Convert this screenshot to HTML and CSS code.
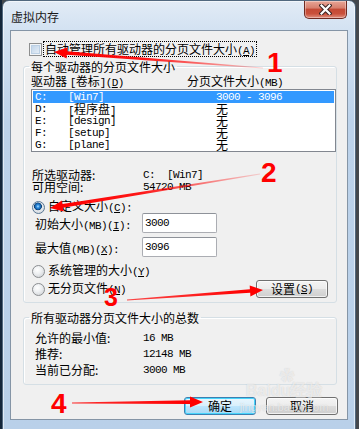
FILE: index.html
```html
<!DOCTYPE html>
<html lang="zh-CN">
<head>
    <meta charset="UTF-8">
    <meta name="viewport" content="width=device-width, initial-scale=1.0">
    <title>虚拟内存</title>
    <link rel="stylesheet" href="styles.css">
</head>
<body>
    <!-- Dialog window -->
    <div class="window">
        <div class="titlebar">
            <span class="title">虚拟内存</span>
            <div class="close-btn">
                <svg width="13" height="11" viewBox="0 0 13 11">
                    <path d="M2.5 1.5 L10.5 9.5 M10.5 1.5 L2.5 9.5" stroke="#3a2424" stroke-width="4.2" stroke-linecap="square"/>
                    <path d="M2.5 1.5 L10.5 9.5 M10.5 1.5 L2.5 9.5" stroke="#ffffff" stroke-width="2.2" stroke-linecap="square"/>
                </svg>
            </div>
        </div>

        <div class="client">
            <div class="auto-row">
                <span class="checkbox"></span>
                <span class="focus-label">自动管理所有驱动器的分页文件大小<span class="en">(<u>A</u>)</span></span>
            </div>

            <!-- Per drive paging file -->
            <fieldset class="group">
                <legend>每个驱动器的分页文件大小</legend>
                <div class="list-head">
                    <span>驱动器 <span class="en">[</span>卷标<span class="en">](<u>D</u>)</span></span>
                    <span>分页文件大小<span class="en">(MB)</span></span>
                </div>
                <div class="drive-list">
                    <div class="drive selected"><span class="en">C:</span><span class="en">[Win7]</span><span class="en">3000 - 3096</span></div>
                    <div class="drive"><span class="en">D:</span><span><span class="en">[</span>程序盘<span class="en">]</span></span><span>无</span></div>
                    <div class="drive"><span class="en">E:</span><span class="en">[design]</span><span>无</span></div>
                    <div class="drive"><span class="en">F:</span><span class="en">[setup]</span><span>无</span></div>
                    <div class="drive"><span class="en">G:</span><span class="en">[plane]</span><span>无</span></div>
                </div>

                <div class="info-row first"><span>所选驱动器:</span><span class="en">C:  [Win7]</span></div>
                <div class="info-row"><span>可用空间:</span><span class="en">54720 MB</span></div>

                <div class="radio-row custom"><span class="radio checked"></span><span>自定义大小<span class="en">(<u>C</u>):</span></span></div>
                <div class="input-row"><span>初始大小<span class="en">(MB)(<u>I</u>):</span></span><span class="textbox en">3000</span></div>
                <div class="input-row second"><span>最大值<span class="en">(MB)(<u>X</u>):</span></span><span class="textbox en">3096</span></div>

                <div class="radio-row system"><span class="radio"></span><span>系统管理的大小<span class="en">(<u>Y</u>)</span></span></div>
                <div class="radio-row nofile">
                    <span class="radio"></span><span>无分页文件<span class="en">(<u>N</u>)</span></span>
                    <span class="btn set-btn">设置<span class="en">(<u>S</u>)</span></span>
                </div>
            </fieldset>

            <!-- Totals for all drives -->
            <fieldset class="group totals">
                <legend>所有驱动器分页文件大小的总数</legend>
                <div class="total-row"><span>允许的最小值:</span><span class="en">16 MB</span></div>
                <div class="total-row"><span>推荐:</span><span class="en">12148 MB</span></div>
                <div class="total-row"><span>当前已分配:</span><span class="en">3000 MB</span></div>
            </fieldset>

            <div class="buttons">
                <span class="btn default">确定</span>
                <span class="btn">取消</span>
            </div>
        </div>
    </div>

    <!-- Watermark -->
    <div class="watermark">
        <span class="paw">&#10047;</span>
        <span class="wm-logo">Baidu经验</span>
        <span class="wm-url">jingyan.baidu.com</span>
    </div>

    <!-- Red annotation arrows drawn over the dialog -->
    <svg class="marks" width="359" height="429" viewBox="0 0 359 429">
        <defs>
            <linearGradient id="fade1" gradientUnits="userSpaceOnUse" x1="263" y1="68" x2="67" y2="52">
                <stop offset="0" stop-color="#ff0000" stop-opacity="0.15"/>
                <stop offset="0.6" stop-color="#ff0000" stop-opacity="0.9"/>
                <stop offset="1" stop-color="#ff0000"/>
            </linearGradient>
            <linearGradient id="fade2" gradientUnits="userSpaceOnUse" x1="260" y1="174" x2="63" y2="206">
                <stop offset="0" stop-color="#ff0000" stop-opacity="0.15"/>
                <stop offset="0.6" stop-color="#ff0000" stop-opacity="0.9"/>
                <stop offset="1" stop-color="#ff0000"/>
            </linearGradient>
            <linearGradient id="fade3" gradientUnits="userSpaceOnUse" x1="127" y1="300" x2="250" y2="291">
                <stop offset="0" stop-color="#ff0000" stop-opacity="0.7"/>
                <stop offset="1" stop-color="#ff0000"/>
            </linearGradient>
            <linearGradient id="fade4" gradientUnits="userSpaceOnUse" x1="72" y1="403" x2="190" y2="402">
                <stop offset="0" stop-color="#ff0000" stop-opacity="0.8"/>
                <stop offset="1" stop-color="#ff0000"/>
            </linearGradient>
        </defs>
        <polygon points="263,67.5 67,51.2 67.3,47.5 54,52 66.6,58.5 66.8,54.8 263,68.5" fill="url(#fade1)"/>
        <polygon points="259.9,173.5 62.5,204.1 62,200.5 50,208 63.6,211.4 63.1,207.7 260.1,174.5" fill="url(#fade2)"/>
        <polygon points="127,300.5 250.2,292.7 250.4,296.4 263,290 249.7,285.5 249.9,289.2 127,299.5" fill="url(#fade3)"/>
        <polygon points="72,403.6 190,404 190,407.5 203,402 190,396.6 190,400.2 72,402.4" fill="url(#fade4)"/>
        <text x="267" y="72" class="num">1</text>
        <text x="261" y="182" class="num">2</text>
        <text x="104" y="306" class="num small">3</text>
        <text x="51" y="413" class="num">4</text>
    </svg>
</body>
</html>
```

FILE: styles.css
```css
/* Page / desktop behind the dialog */
body {
    margin: 0;
    width: 359px;
    height: 429px;
    position: relative;
    overflow: hidden;
    font-family: "Noto Sans CJK SC", sans-serif;
    font-size: 12px;
    color: #000;
    background: linear-gradient(to right, #14263a 0, #14263a 2px, #44484d 2px);
}

/* Latin text in the dialog (SimSun style half-width) */
.en {
    font-family: "Liberation Mono", monospace;
    font-size: 11px;
    letter-spacing: -0.6px;
    white-space: pre;
}

u {
    text-decoration-thickness: 1px;
    text-underline-offset: 1px;
}

/* Aero frame */
.window {
    width: 354px;
    height: 432px;
    margin-left: 2px;
    box-sizing: border-box;
    padding: 0 7px 0 7px;
    border: 1px solid #51687f;
    border-radius: 7px 7px 0 0;
    background: linear-gradient(to bottom, #e2ebf6 0, #d3e2f2 28px, #bcd2ea 120px, #b9d0e9 100%);
    box-shadow: inset 0 0 0 1px rgba(255, 255, 255, 0.55);
    display: flex;
    flex-direction: column;
}

.titlebar {
    height: 29px;
    display: flex;
    justify-content: space-between;
    align-items: flex-start;
}

.title {
    margin: 8px 0 0 1px;
    line-height: 16px;
    color: #1a1a1a;
}

.close-btn {
    width: 43px;
    height: 18px;
    margin-right: 1px;
    box-sizing: border-box;
    border: 1px solid #6e2a22;
    border-top: none;
    border-radius: 0 0 5px 5px;
    background: linear-gradient(to bottom, #e8a697 0, #d7806f 40%, #c44a36 50%, #c9503b 75%, #e09080 100%);
    box-shadow: inset 0 0 0 1px rgba(255, 255, 255, 0.35);
    display: flex;
    justify-content: center;
    align-items: center;
}

/* Client area */
.client {
    height: 390px;
    box-sizing: border-box;
    background: #f0f0f0;
    border: 1px solid #8595a6;
    padding-top: 10px;
    display: flex;
    flex-direction: column;
}

.auto-row {
    display: flex;
    align-items: center;
    height: 16px;
    margin-left: 18px;
}

.checkbox {
    width: 13px;
    height: 13px;
    box-sizing: border-box;
    border: 1px solid #8e8f8f;
    background: linear-gradient(135deg, #b9cfe6, #eef4fa);
    box-shadow: inset 0 0 0 1px #f4f6f8, inset 0 0 0 2px #bcd0e4;
}

.focus-label {
    margin-left: 1px;
    padding: 0 1px;
    height: 16px;
    line-height: 14px;
    box-sizing: border-box;
    border: 1px dotted #000;
}

/* Group boxes */
.group {
    margin: 3px 10px 0 12px;
    padding: 0 0 4px 7px;
    min-width: 0;
    border: 1px solid #d5dfe5;
    border-radius: 3px;
    box-shadow: inset 1px 1px 0 #fff;
}

.group legend {
    padding: 0 2px;
    margin-left: -2px;
    line-height: 13px;
}

.list-head {
    display: flex;
    height: 12px;
    line-height: 12px;
    margin-top: 2px;
}

.list-head span:first-child {
    width: 156px;
}

.drive-list {
    margin-top: 2px;
    height: 63px;
    box-sizing: border-box;
    border: 1px solid #828790;
    background: #fff;
    padding: 1px 1px 0 1px;
}

.drive {
    display: grid;
    grid-template-columns: 33px 148px 1fr;
    height: 12px;
    line-height: 12px;
    padding-left: 2px;
}

.drive.selected {
    background: #3399ff;
    color: #fff;
}

.info-row {
    display: grid;
    grid-template-columns: 111px 1fr;
    height: 12px;
    line-height: 12px;
    margin-left: 1px;
}

.info-row.first {
    margin-top: 17px;
}

.radio-row {
    display: flex;
    align-items: center;
    height: 12px;
    line-height: 12px;
    margin-left: 1px;
}

.radio-row.custom {
    margin-top: 8px;
}

.radio-row.system {
    margin-top: 8px;
}

.radio-row.nofile {
    height: 18px;
    margin-top: 3px;
}

.radio {
    width: 13px;
    height: 13px;
    margin-right: 3px;
    box-sizing: border-box;
    border-radius: 50%;
    border: 1px solid #8a8d90;
    background: radial-gradient(circle at 40% 35%, #ffffff 0, #eef0f2 40%, #c9ccd0 100%);
    flex-shrink: 0;
}

.radio.checked {
    border-color: #5a7895;
    background: radial-gradient(circle at 45% 40%, #b6e3ff 0, #2f8ee0 1.5px, #155fa8 3px, #0b3c6e 3.6px, #e6eaee 4.2px, #c5ccd4 100%);
}

.input-row {
    display: grid;
    grid-template-columns: 107px 75px;
    align-items: center;
    height: 20px;
    margin-left: 4px;
}

.input-row.second {
    margin-top: 4px;
}

.textbox {
    height: 20px;
    box-sizing: border-box;
    border: 1px solid #abadb3;
    border-top-color: #8e9299;
    border-radius: 2px;
    background: #fff;
    padding: 2px 0 0 2px;
    line-height: 14px;
}

/* Push buttons */
.btn {
    width: 72px;
    height: 18px;
    box-sizing: border-box;
    border: 1px solid #707070;
    border-radius: 3px;
    background: linear-gradient(to bottom, #f4f4f4 0, #ececec 48%, #dddddd 50%, #cfcfcf 100%);
    box-shadow: inset 0 0 0 1px rgba(255, 255, 255, 0.7);
    display: flex;
    justify-content: center;
    align-items: center;
    line-height: 14px;
}

.set-btn {
    margin-left: auto;
    margin-right: 8px;
}

.btn.default {
    border-color: #3c7fb1;
    background: linear-gradient(to bottom, #eaf6fd 0, #d9f0fc 48%, #bee6fd 50%, #a7d9f5 100%);
    box-shadow: inset 0 0 0 1px #48d5fb;
}

.totals {
    margin-top: 8px;
    padding-bottom: 6px;
}

.total-row {
    display: grid;
    grid-template-columns: 108px 1fr;
    height: 16px;
    line-height: 16px;
    margin-left: 4px;
}

.totals legend + .total-row {
    margin-top: 6px;
}

.buttons {
    display: flex;
    justify-content: flex-end;
    gap: 10px;
    margin: 12px 9px 0 0;
}

/* Faint site watermark */
.watermark {
    position: absolute;
    left: 240px;
    top: 368px;
    width: 88px;
    display: flex;
    flex-direction: column;
    align-items: center;
    color: rgba(255, 255, 255, 0.6);
    text-shadow: 0 0 1px rgba(110, 110, 110, 0.3);
    pointer-events: none;
}

.paw {
    font-size: 15px;
    line-height: 14px;
    margin-left: 6px;
}

.wm-logo {
    font-family: "Liberation Sans", sans-serif;
    font-size: 16px;
    font-weight: bold;
    line-height: 18px;
}

.wm-url {
    font-family: "Liberation Sans", sans-serif;
    font-size: 11px;
    line-height: 14px;
}

/* Annotation overlay */
.marks {
    position: absolute;
    left: 0;
    top: 0;
    pointer-events: none;
}

.num {
    font-family: "Liberation Sans", sans-serif;
    font-weight: bold;
    font-size: 28px;
    fill: #ff0000;
}

.num.small {
    font-size: 25px;
}
```
